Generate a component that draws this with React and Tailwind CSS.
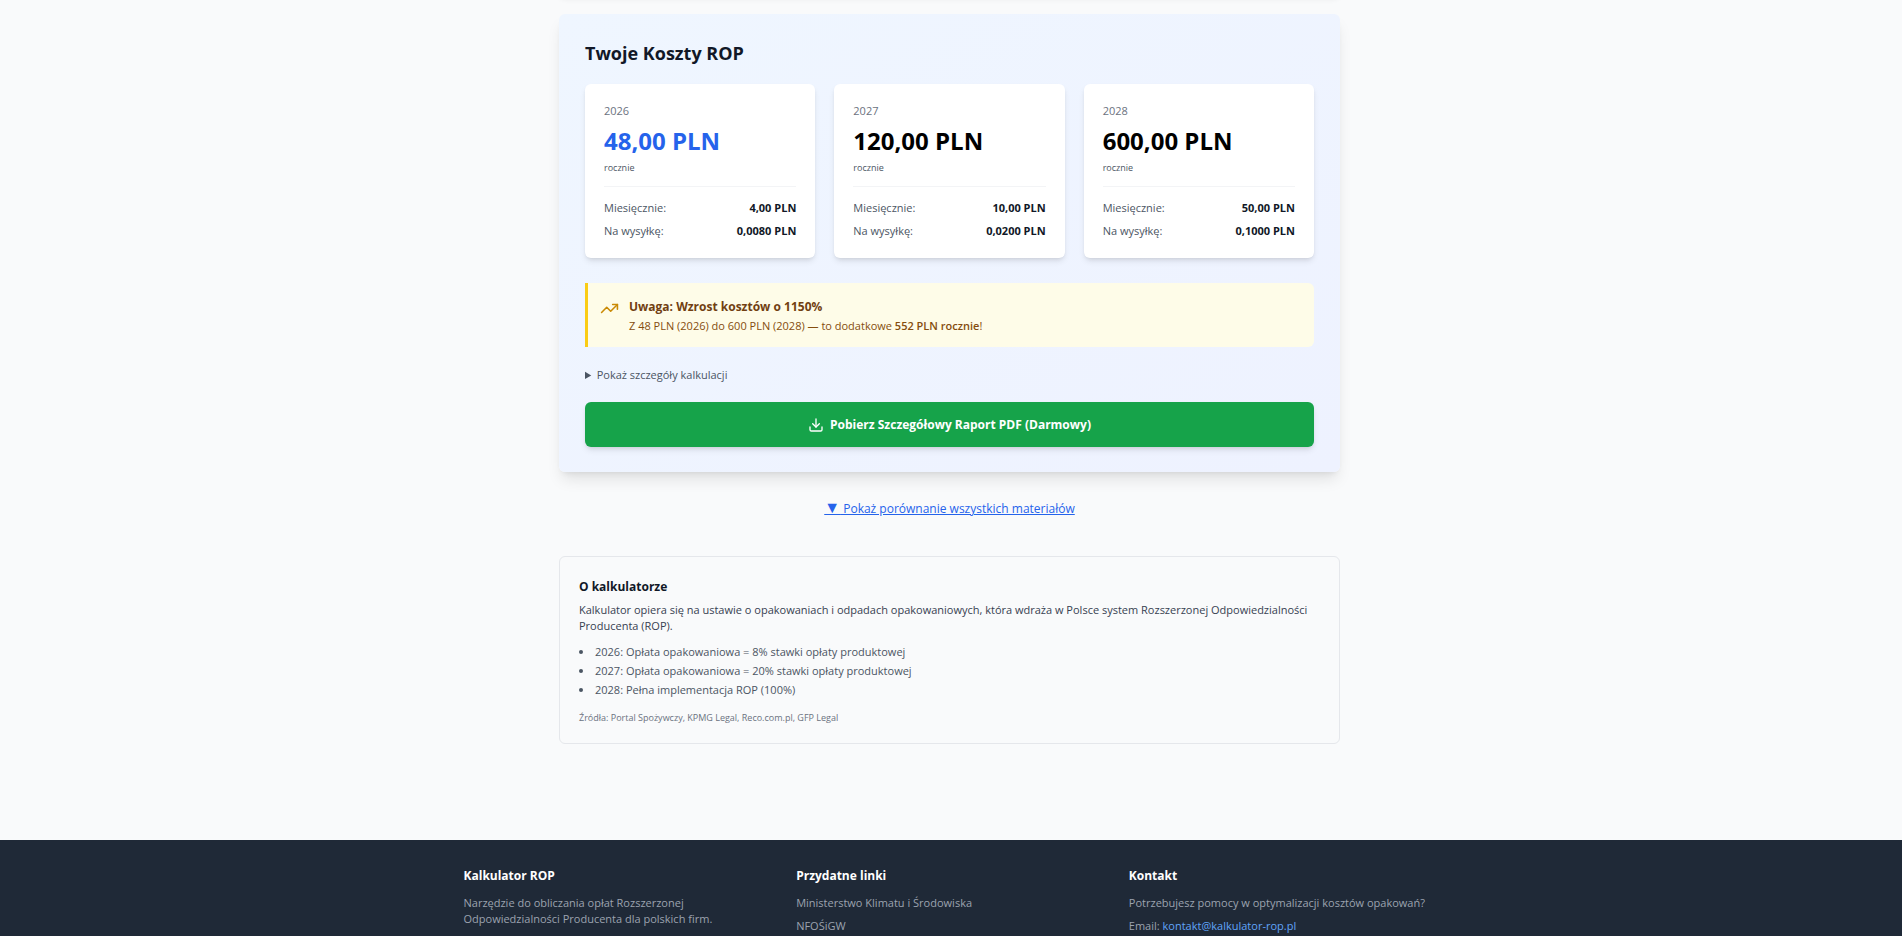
import { Download, TrendingUp } from "lucide-react";

const years = [
  { year: "2026", total: "48,00 PLN", monthly: "4,00 PLN", perShipment: "0,0080 PLN", color: "text-[#2563eb]" },
  { year: "2027", total: "120,00 PLN", monthly: "10,00 PLN", perShipment: "0,0200 PLN", color: "text-black" },
  { year: "2028", total: "600,00 PLN", monthly: "50,00 PLN", perShipment: "0,1000 PLN", color: "text-black" },
];

const rates = [
  "2026: Opłata opakowaniowa = 8% stawki opłaty produktowej",
  "2027: Opłata opakowaniowa = 20% stawki opłaty produktowej",
  "2028: Pełna implementacja ROP (100%)",
];

function CostCard({ item }) {
  return (
    <div className="rounded-md bg-white p-[19px] shadow-md">
      <p className="text-[11px] leading-4 font-medium text-[#6b7280]">{item.year}</p>
      <p className={`mt-1.5 text-[24px] leading-8 font-bold ${item.color}`}>{item.total}</p>
      <p className="mt-1 text-[9px] leading-[13px] text-[#4b5563]">rocznie</p>
      <dl className="mt-3 border-t border-[#f3f4f6] pt-[13px] text-[11px] leading-4">
        <div className="flex justify-between">
          <dt className="text-[#4b5563]">Miesięcznie:</dt>
          <dd className="font-bold text-[#111827]">{item.monthly}</dd>
        </div>
        <div className="mt-[7px] flex justify-between">
          <dt className="text-[#4b5563]">Na wysyłkę:</dt>
          <dd className="font-bold text-[#111827]">{item.perShipment}</dd>
        </div>
      </dl>
    </div>
  );
}

function Results() {
  return (
    <section className="mt-[19px] rounded-md bg-linear-to-br from-[#eff6ff] to-[#eef2ff] px-[26px] py-[25px] shadow-lg">
      <h2 className="text-[18px] leading-[28px] font-bold text-[#111827]">Twoje Koszty ROP</h2>
      <div className="mt-[17px] grid grid-cols-3 gap-[19px]">
        {years.map((item) => (
          <CostCard key={item.year} item={item} />
        ))}
      </div>
      <div className="mt-[25px] flex items-start gap-[10px] rounded-r-md border-l-3 border-[#facc15] bg-[#fefce8] px-3 py-[13px]">
        <TrendingUp className="mt-[3px] size-[19px] text-[#ca8a04]" />
        <div>
          <p className="text-[12px] leading-[22px] font-bold text-[#713f12]">Uwaga: Wzrost kosztów o 1150%</p>
          <p className="text-[11px] leading-4 text-[#854d0e]">
            Z 48 PLN (2026) do 600 PLN (2028) — to dodatkowe{" "}
            <strong className="font-semibold">552 PLN rocznie</strong>!
          </p>
        </div>
      </div>
      <details className="mt-5 text-[11px] leading-4">
        <summary className="cursor-pointer font-medium text-[#4b5563]">Pokaż szczegóły kalkulacji</summary>
      </details>
      <button className="mt-[19px] flex w-full items-center justify-center gap-1.5 rounded-md bg-[#16a34a] py-3 text-[12px] leading-[21px] font-bold text-white shadow-md">
        <Download className="size-4" />
        Pobierz Szczegółowy Raport PDF (Darmowy)
      </button>
    </section>
  );
}

function About() {
  return (
    <section className="mt-[37px] rounded-md border border-[#e5e7eb] p-[19px]">
      <h3 className="text-[12px] leading-[22px] font-bold text-[#111827]">O kalkulatorze</h3>
      <p className="mt-1 text-[11px] leading-4 text-[#374151]">
        Kalkulator opiera się na ustawie o opakowaniach i odpadach opakowaniowych, która wdraża w Polsce system
        Rozszerzonej Odpowiedzialności Producenta (ROP).
      </p>
      <ul className="mt-[10px] list-inside list-disc space-y-[3px] text-[11px] leading-4 text-[#4b5563]">
        {rates.map((rate) => (
          <li key={rate}>{rate}</li>
        ))}
      </ul>
      <p className="mt-[13px] text-[9px] leading-[13px] text-[#6b7280]">
        Źródła: Portal Spożywczy, KPMG Legal, Reco.com.pl, GFP Legal
      </p>
    </section>
  );
}

function Footer() {
  return (
    <footer className="mt-24 bg-[#1f2937] py-[26px] pr-[3px] text-[11px] leading-4 text-[#9ca3af]">
      <div className="mx-auto grid max-w-[1024px] grid-cols-3 gap-[26px] px-[26px]">
        <div>
          <h3 className="mb-[9px] text-[12px] leading-5 font-bold text-white">Kalkulator ROP</h3>
          <p>Narzędzie do obliczania opłat Rozszerzonej Odpowiedzialności Producenta dla polskich firm.</p>
        </div>
        <div>
          <h3 className="mb-[9px] text-[12px] leading-5 font-bold text-white">Przydatne linki</h3>
          <ul className="space-y-[7px]">
            <li><a href="#ministerstwo">Ministerstwo Klimatu i Środowiska</a></li>
            <li><a href="#nfosigw">NFOŚiGW</a></li>
          </ul>
        </div>
        <div>
          <h3 className="mb-[9px] text-[12px] leading-5 font-bold text-white">Kontakt</h3>
          <p>Potrzebujesz pomocy w optymalizacji kosztów opakowań?</p>
          <p className="mt-[7px]">
            Email: <a href="mailto:kontakt@kalkulator-rop.pl" className="text-[#60a5fa]">kontakt@kalkulator-rop.pl</a>
          </p>
        </div>
      </div>
    </footer>
  );
}

export default function App() {
  return (
    <div className="h-screen overflow-hidden bg-[#f9fafb] font-['Open_Sans',sans-serif]">
      <div className="pr-[3px]">
        <main className="mx-auto -mt-[15px] max-w-[781px]">
          {/* lower edge of the form card, scrolled out of view */}
          <div className="h-[10px] rounded-b-md bg-white shadow-md" />
          <Results />
          <div className="mt-[27px] flex justify-center">
            <button className="text-[12px] leading-5 font-medium text-[#2563eb] underline">
              <span className="text-[16px] leading-4">▼</span> Pokaż porównanie wszystkich materiałów
            </button>
          </div>
          <About />
        </main>
      </div>
      <Footer />
    </div>
  );
}
